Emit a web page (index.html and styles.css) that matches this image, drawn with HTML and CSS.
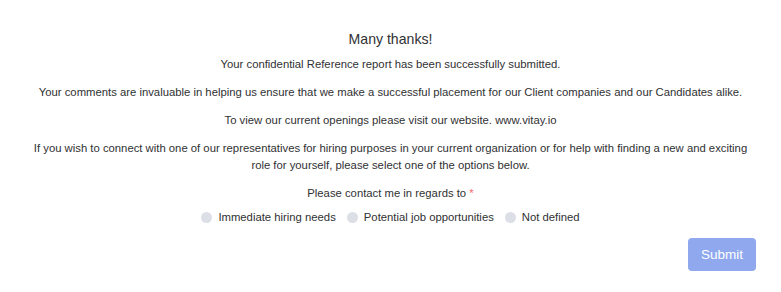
FILE: index.html
```html
<!DOCTYPE html>
<html lang="en">
<head>
    <title>Thank you</title>
    <link rel="stylesheet" href="styles.css">
</head>
<body>
    <div class="thanks">
        <h2 class="title">Many thanks!</h2>
        <p>Your confidential Reference report has been successfully submitted.</p>
        <p>Your comments are invaluable in helping us ensure that we make a successful placement for our Client companies and our Candidates alike.</p>
        <p>To view our current openings please visit our website. www.vitay.io</p>
        <p>If you wish to connect with one of our representatives for hiring purposes in your current organization or for help with finding a new and exciting role for yourself, please select one of the options below.</p>
        <div class="contact">
            <div class="label">Please contact me in regards to <span class="req">*</span></div>
            <div class="options">
                <label class="opt"><span class="radio"></span>Immediate hiring needs</label>
                <label class="opt"><span class="radio"></span>Potential job opportunities</label>
                <label class="opt"><span class="radio"></span>Not defined</label>
            </div>
        </div>
    </div>
    <div class="actions">
        <button class="submit" disabled>Submit</button>
    </div>
</body>
</html>
```
FILE: styles.css
```css
body {
    margin: 0;
    background-color: #ffffff;
    font-family: "Liberation Sans", Arial, sans-serif;
    color: #303133;
}
.thanks {
    padding: 29px 28px 0;
    text-align: center;
    font-size: 11.3px;
    line-height: 17px;
}
.title {
    margin: 0 0 7px;
    font-size: 14.1px;
    font-weight: normal;
    line-height: 20px;
}
.thanks p {
    margin: 0 0 11px;
}
.label {
    margin-bottom: 7px;
}
.req {
    color: #f56c6c;
}
.options {
    display: flex;
    justify-content: center;
    gap: 11px;
}
.opt {
    display: flex;
    align-items: center;
    gap: 6px;
}
.radio {
    width: 11px;
    height: 11px;
    border-radius: 50%;
    background-color: #dcdfe6;
}
.actions {
    display: flex;
    justify-content: flex-end;
    padding: 12px 25px 0;
}
.submit {
    width: 68px;
    height: 33px;
    border: none;
    border-radius: 4px;
    background-color: #8fa8ee;
    color: #ffffff;
    font-family: "Liberation Sans", Arial, sans-serif;
    font-size: 13.5px;
}
```
